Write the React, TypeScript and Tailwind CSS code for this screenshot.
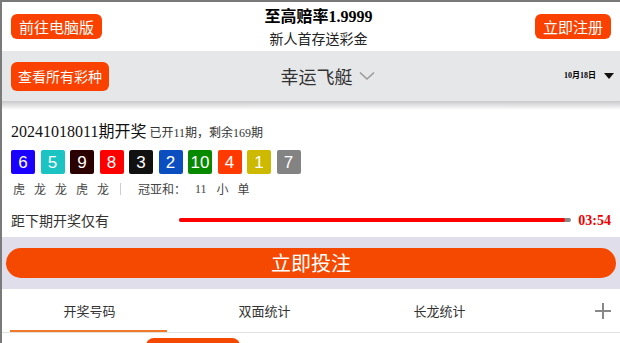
import React from "react";

// 开奖号码 + 颜色
const BALLS: { n: number; bg: string }[] = [
  { n: 6, bg: "bg-[#1a00ff]" },
  { n: 5, bg: "bg-[#1cc3c3]" },
  { n: 9, bg: "bg-[#2a0000]" },
  { n: 8, bg: "bg-[#ff0000]" },
  { n: 3, bg: "bg-[#111111]" },
  { n: 2, bg: "bg-[#0a4ec0]" },
  { n: 10, bg: "bg-[#078a00]" },
  { n: 4, bg: "bg-[#ff3a00]" },
  { n: 1, bg: "bg-[#cdb900]" },
  { n: 7, bg: "bg-[#838383]" },
];

const SANS = "font-['Noto_Sans_CJK_SC','Liberation_Sans',sans-serif]";
const SERIF = "font-['Liberation_Serif','Noto_Sans_CJK_SC',serif]";

export default function App() {
  return (
    <div className={`w-[620px] h-[343px] overflow-hidden bg-white border-l-2 border-t-2 border-[#7a7a7a] ${SANS}`}>
      {/* Header */}
      <div className="h-[49px] flex items-center justify-between px-[9px] bg-white">
        <button className="h-[25px] px-[8px] rounded-[6px] bg-[#fb4100] text-white text-[15px] leading-none">
          前往电脑版
        </button>
        <div className="flex flex-col items-center leading-none mt-[1px]">
          <div className={`text-[16px] font-bold text-black ${SERIF}`}>至高赔率1.9999</div>
          <div className="text-[14px] text-[#222] mt-[6px]">新人首存送彩金</div>
        </div>
        <button className="h-[25px] px-[8px] rounded-[6px] bg-[#fb4100] text-white text-[15px] leading-none">
          立即注册
        </button>
      </div>

      {/* Nav */}
      <div className="h-[50px] bg-[#e6e7e9] flex items-center pl-[9px] pr-[6px]">
        <button className="h-[29px] px-[7px] rounded-[6px] bg-[#fb4100] text-white text-[14px] leading-none">
          查看所有彩种
        </button>
        <div className="flex-1 flex items-center justify-center gap-[6px] pr-[18px]">
          <span className="text-[18px] text-[#333]">幸运飞艇</span>
          <svg width="16" height="10" viewBox="0 0 16 10">
            <path d="M1 1.5 L8 8 L15 1.5" fill="none" stroke="#9a9a9a" strokeWidth="1.6" />
          </svg>
        </div>
        <span className={`text-[8px] font-bold text-black ${SERIF} mr-[8px]`}>10月18日</span>
        <svg width="10" height="7" viewBox="0 0 10 7">
          <path d="M0 0 L10 0 L5 6 Z" fill="#111" />
        </svg>
      </div>

      {/* Result panel */}
      <div className="bg-gradient-to-b from-[#c9c9cc] to-white h-[9px]" />
      <div className="px-[9px] pt-[10px]">
        <div className="flex items-baseline h-[24px] leading-[24px] text-[#111]">
          <span className={`text-[16px] ${SERIF}`}>20241018011期开奖</span>
          <span className={`text-[12px] ml-[3px] text-[#333] ${SERIF}`}>已开11期，剩余169期</span>
        </div>
        <div className="flex gap-[5.5px] mt-[6px]">
          {BALLS.map((b) => (
            <div
              key={b.n}
              className={`${b.bg} w-[24px] h-[24px] rounded-[2px] flex items-center justify-center text-white text-[17px] font-['Liberation_Sans',sans-serif] leading-none`}
            >
              {b.n}
            </div>
          ))}
        </div>
        <div className="flex items-center h-[16px] text-[12px] text-[#444] mt-[7px] pl-[2px]">
          <span className="tracking-[9px]">虎龙龙虎龙</span>
          <span className="w-px h-[12px] bg-[#ccc] ml-[2px] mr-[17px]" />
          <span>冠亚和：</span>
          <span className={`ml-[9px] ${SERIF}`}>11</span>
          <span className="ml-[10px]">小</span>
          <span className="ml-[9px]">单</span>
        </div>
        <div className="flex items-center mt-[13px] h-[20px]">
          <span className="text-[14px] text-[#333] w-[168px]">距下期开奖仅有</span>
          <div className="w-[394px] h-[4px] bg-[#888] rounded-full">
            <div className="h-full w-[98.5%] bg-[#ff0000] rounded-full" />
          </div>
          <span className={`ml-[7px] text-[14px] font-bold text-[#ee0000] ${SERIF}`}>03:54</span>
        </div>
      </div>

      {/* Bet button */}
      <div className="mt-[7px] bg-[#dfdeea] h-[52px] flex items-center px-[4px]">
        <button className="w-full h-[30px] rounded-full bg-[#f54800] text-white text-[20px] leading-none">
          立即投注
        </button>
      </div>

      {/* Tabs */}
      <div className="flex items-center h-[43px] text-[13px] text-[#333]">
        <div className="w-[175px] h-full flex items-center justify-center relative">
          开奖号码
          <div className="absolute left-[8px] right-[10px] bottom-0 h-[2px] bg-[#f07a2a]" />
        </div>
        <div className="w-[175px] flex justify-center">双面统计</div>
        <div className="w-[175px] flex justify-center">长龙统计</div>
        <div className="flex-1 flex justify-end pr-[9px]">
          <svg width="16" height="16" viewBox="0 0 16 16">
            <path d="M8 0 V16 M0 8 H16" stroke="#888" strokeWidth="2" />
          </svg>
        </div>
      </div>
      <div className="h-px bg-[#e2e2e2]" />
      <div className="pl-[144px] pt-[5px]">
        <div className="w-[94px] h-[20px] rounded-[8px] bg-[#f54800]" />
      </div>
    </div>
  );
}
